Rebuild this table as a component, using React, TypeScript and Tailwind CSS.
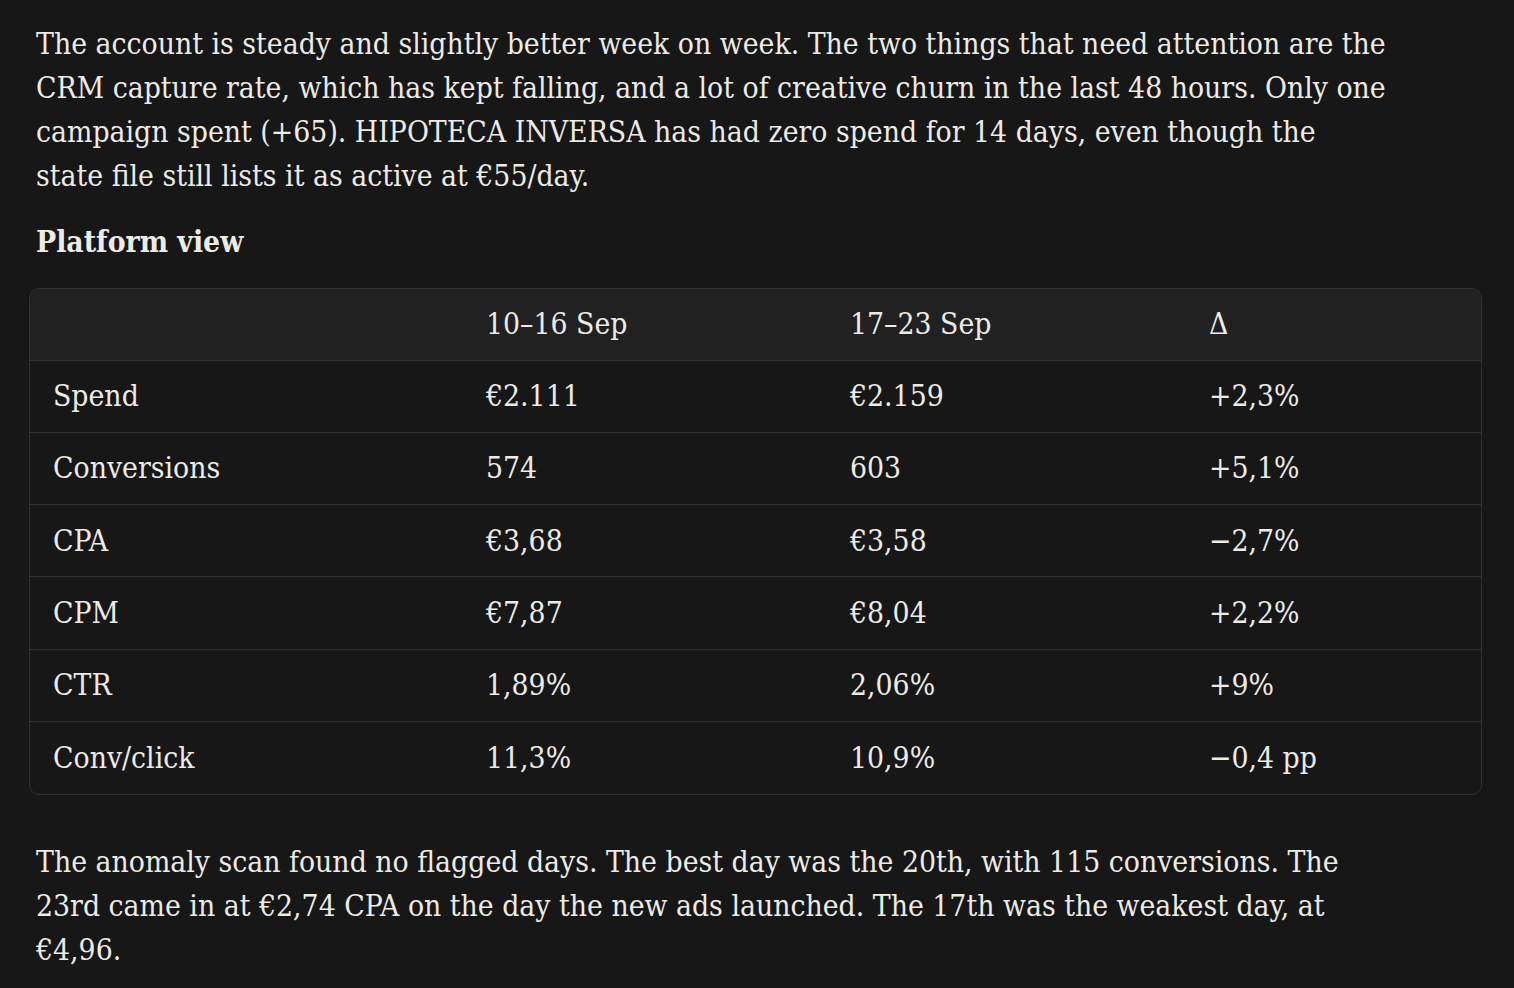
import React from "react";

const rows: [string, string, string, string][] = [
  ["Spend", "€2.111", "€2.159", "+2,3%"],
  ["Conversions", "574", "603", "+5,1%"],
  ["CPA", "€3,68", "€3,58", "−2,7%"],
  ["CPM", "€7,87", "€8,04", "+2,2%"],
  ["CTR", "1,89%", "2,06%", "+9%"],
  ["Conv/click", "11,3%", "10,9%", "−0,4 pp"],
];

export default function App() {
  return (
    <div className="min-h-screen bg-[#171717] text-[#ecebe6] font-['DejaVu_Serif_Condensed','DejaVu_Serif',serif] text-[29.8px] leading-[44px] pl-[29px] pr-[32px] pt-[22px]">
      <p className="pl-[7px] w-[1359px]">
        The account is steady and slightly better week on week. The two things that need attention are the CRM capture rate, which has kept falling, and a lot of creative churn in the last 48 hours. Only one campaign spent (+65). HIPOTECA INVERSA has had zero spend for 14 days, even though the state file still lists it as active at €55/day.
      </p>
      <h3 className="pl-[7px] mt-[22px] font-bold">Platform view</h3>
      <div className="mt-[24px] rounded-[10px] border border-[#323232] overflow-hidden">
        <table className="w-full table-fixed border-collapse text-left">
          <colgroup>
            <col className="w-[432px]" />
            <col className="w-[364px]" />
            <col className="w-[359px]" />
            <col />
          </colgroup>
          <thead>
            <tr className="bg-[#212121] h-[71px]">
              <th className="pl-[23px] font-normal"></th>
              <th className="pl-[24px] font-normal">10–16 Sep</th>
              <th className="pl-[24px] font-normal">17–23 Sep</th>
              <th className="pl-[24px] font-normal">Δ</th>
            </tr>
          </thead>
          <tbody>
            {rows.map((r) => (
              <tr key={r[0]} className="border-t border-[#323232] h-[72.3px]">
                <td className="pl-[23px]">{r[0]}</td>
                <td className="pl-[24px]">{r[1]}</td>
                <td className="pl-[24px]">{r[2]}</td>
                <td className="pl-[24px]">{r[3]}</td>
              </tr>
            ))}
          </tbody>
        </table>
      </div>
      <p className="pl-[7px] w-[1359px] mt-[45px]">
        The anomaly scan found no flagged days. The best day was the 20th, with 115 conversions. The 23rd came in at €2,74 CPA on the day the new ads launched. The 17th was the weakest day, at €4,96.
      </p>
    </div>
  );
}
